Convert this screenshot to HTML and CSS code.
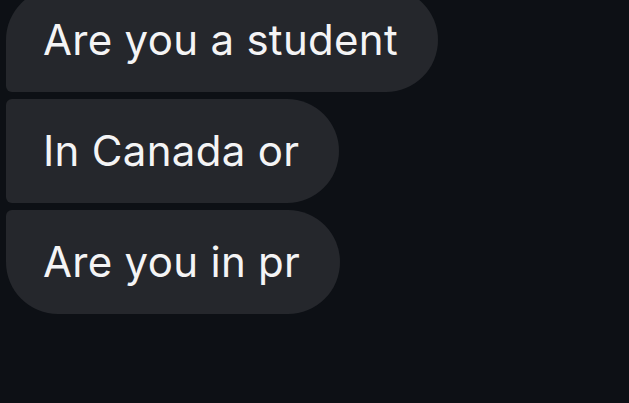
FILE: index.html
```html
<!DOCTYPE html>
<html lang="en">
<head>
    <meta charset="UTF-8">
    <meta name="viewport" content="width=device-width, initial-scale=1.0">
    <title>Messages</title>
    <link rel="stylesheet" href="styles.css">
</head>
<body>
    <div class="thread">
        <div class="bubble first">Are you a student</div>
        <div class="bubble">In Canada or</div>
        <div class="bubble last">Are you in pr</div>
    </div>
</body>
</html>
```

FILE: styles.css
```css
* {
    margin: 0;
    padding: 0;
    box-sizing: border-box;
}

body, html {
    font-family: 'Inter', 'Liberation Sans', sans-serif;
    height: 100%;
    background-color: #0d1015;
    color: #f4f4f5;
    overflow: hidden;
}

.thread {
    display: flex;
    flex-direction: column;
    align-items: flex-start;
    gap: 7px;
    margin-top: -12px;
    padding-left: 6px;
}

.bubble {
    display: flex;
    align-items: center;
    height: 104px;
    padding: 0 40px 1px 37px;
    background-color: #25272c;
    font-size: 42px;
    letter-spacing: 0.3px;
    line-height: 1;
    border-radius: 6px 52px 52px 6px;
}

.bubble.first {
    border-radius: 52px 52px 52px 6px;
}

.bubble.last {
    border-radius: 6px 52px 52px 52px;
}
```
